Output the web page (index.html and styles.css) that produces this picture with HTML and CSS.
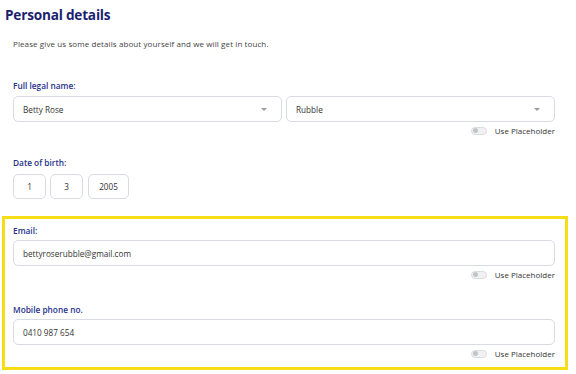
FILE: index.html
```html
<!DOCTYPE html>
<html>
<head>
<meta charset="utf-8">
<link rel="stylesheet" href="styles.css">
</head>
<body>
<div class="page">
  <h1 class="title">Personal details</h1>
  <p class="intro">Please give us some details about yourself and we will get in touch.</p>

  <div class="field field-name">
    <div class="label">Full legal name:</div>
    <div class="row">
      <div class="control select"><span>Betty Rose</span><span class="caret"></span></div>
      <div class="control select"><span>Rubble</span><span class="caret"></span></div>
    </div>
    <div class="toggle-row"><span class="toggle"><span class="knob"></span></span><span class="toggle-text">Use Placeholder</span></div>
  </div>

  <div class="field field-dob">
    <div class="label">Date of birth:</div>
    <div class="dob">
      <div class="box small">1</div>
      <div class="box small">3</div>
      <div class="box year">2005</div>
    </div>
  </div>

  <div class="highlight">
    <div class="field">
      <div class="label">Email:</div>
      <div class="control input">bettyroserubble@gmail.com</div>
      <div class="toggle-row"><span class="toggle"><span class="knob"></span></span><span class="toggle-text">Use Placeholder</span></div>
    </div>
    <div class="field field-mobile">
      <div class="label">Mobile phone no.</div>
      <div class="control input">0410 987 654</div>
      <div class="toggle-row"><span class="toggle"><span class="knob"></span></span><span class="toggle-text">Use Placeholder</span></div>
    </div>
  </div>
</div>
</body>
</html>
```

FILE: styles.css
```css
* { box-sizing: border-box; }
html, body { margin: 0; padding: 0; background: #fff; }
body {
  font-family: "Open Sans", "Noto Sans", sans-serif;
  color: #333;
  width: 576px;
  height: 374px;
  overflow: hidden;
}
.page { padding-top: 5px; }
.title {
  margin: 0 0 0 5px;
  font-size: 13.6px;
  font-weight: 700;
  color: #1b1f70;
  line-height: 20px;
  letter-spacing: -0.2px;
}
.intro {
  margin: 14px 0 0 13px;
  font-size: 8px;
  line-height: 10px;
  color: #444;
  letter-spacing: 0.1px;
}
.field { padding: 0 21px 0 13px; }
.field-name { margin-top: 32px; }
.label {
  font-size: 8.3px;
  font-weight: 600;
  color: #25318a;
  line-height: 10px;
  height: 10px;
}
.row { display: flex; gap: 4px; margin-top: 5px; }
.control {
  border: 1px solid #d9dbe2;
  border-radius: 5px;
  height: 26px;
  display: flex;
  align-items: center;
  padding: 0 9px;
  font-size: 8.2px;
  color: #333;
}
.select { flex: 1; justify-content: space-between; padding-right: 14px; }
.caret {
  width: 0; height: 0;
  border-left: 3px solid transparent;
  border-right: 3px solid transparent;
  border-top: 3px solid #9a9ca3;
}
.toggle-row {
  display: flex;
  justify-content: flex-end;
  align-items: center;
  gap: 8px;
  margin-top: 4px;
  height: 9px;
}
.toggle {
  width: 16px; height: 8px;
  border: 1px solid #dcdde1;
  background: #f1f1f3;
  border-radius: 4px;
  display: flex;
  align-items: center;
  padding-left: 1px;
}
.knob { width: 5px; height: 5px; border-radius: 50%; background: #c3c4c8; }
.toggle-text { font-size: 8px; color: #333; line-height: 9px; }
.field-dob { margin-top: 23px; }
.dob { display: flex; gap: 4px; margin-top: 6px; }
.box {
  height: 25px;
  border: 1px solid #d9dbe2;
  border-radius: 5px;
  display: flex;
  align-items: center;
  justify-content: center;
  font-size: 8.2px;
  color: #333;
}
.small { width: 33px; }
.year { width: 41px; margin-left: 1px; }
.highlight {
  margin: 17px 8px 0 2px;
  border: 3px solid #f7dd17;
  padding: 7px 0 6px 0;
  height: 154px;
}
.highlight .field { padding: 0 10px 0 8px; }
.highlight .control { margin-top: 4px; }
.field-mobile { margin-top: 26px; }
```
